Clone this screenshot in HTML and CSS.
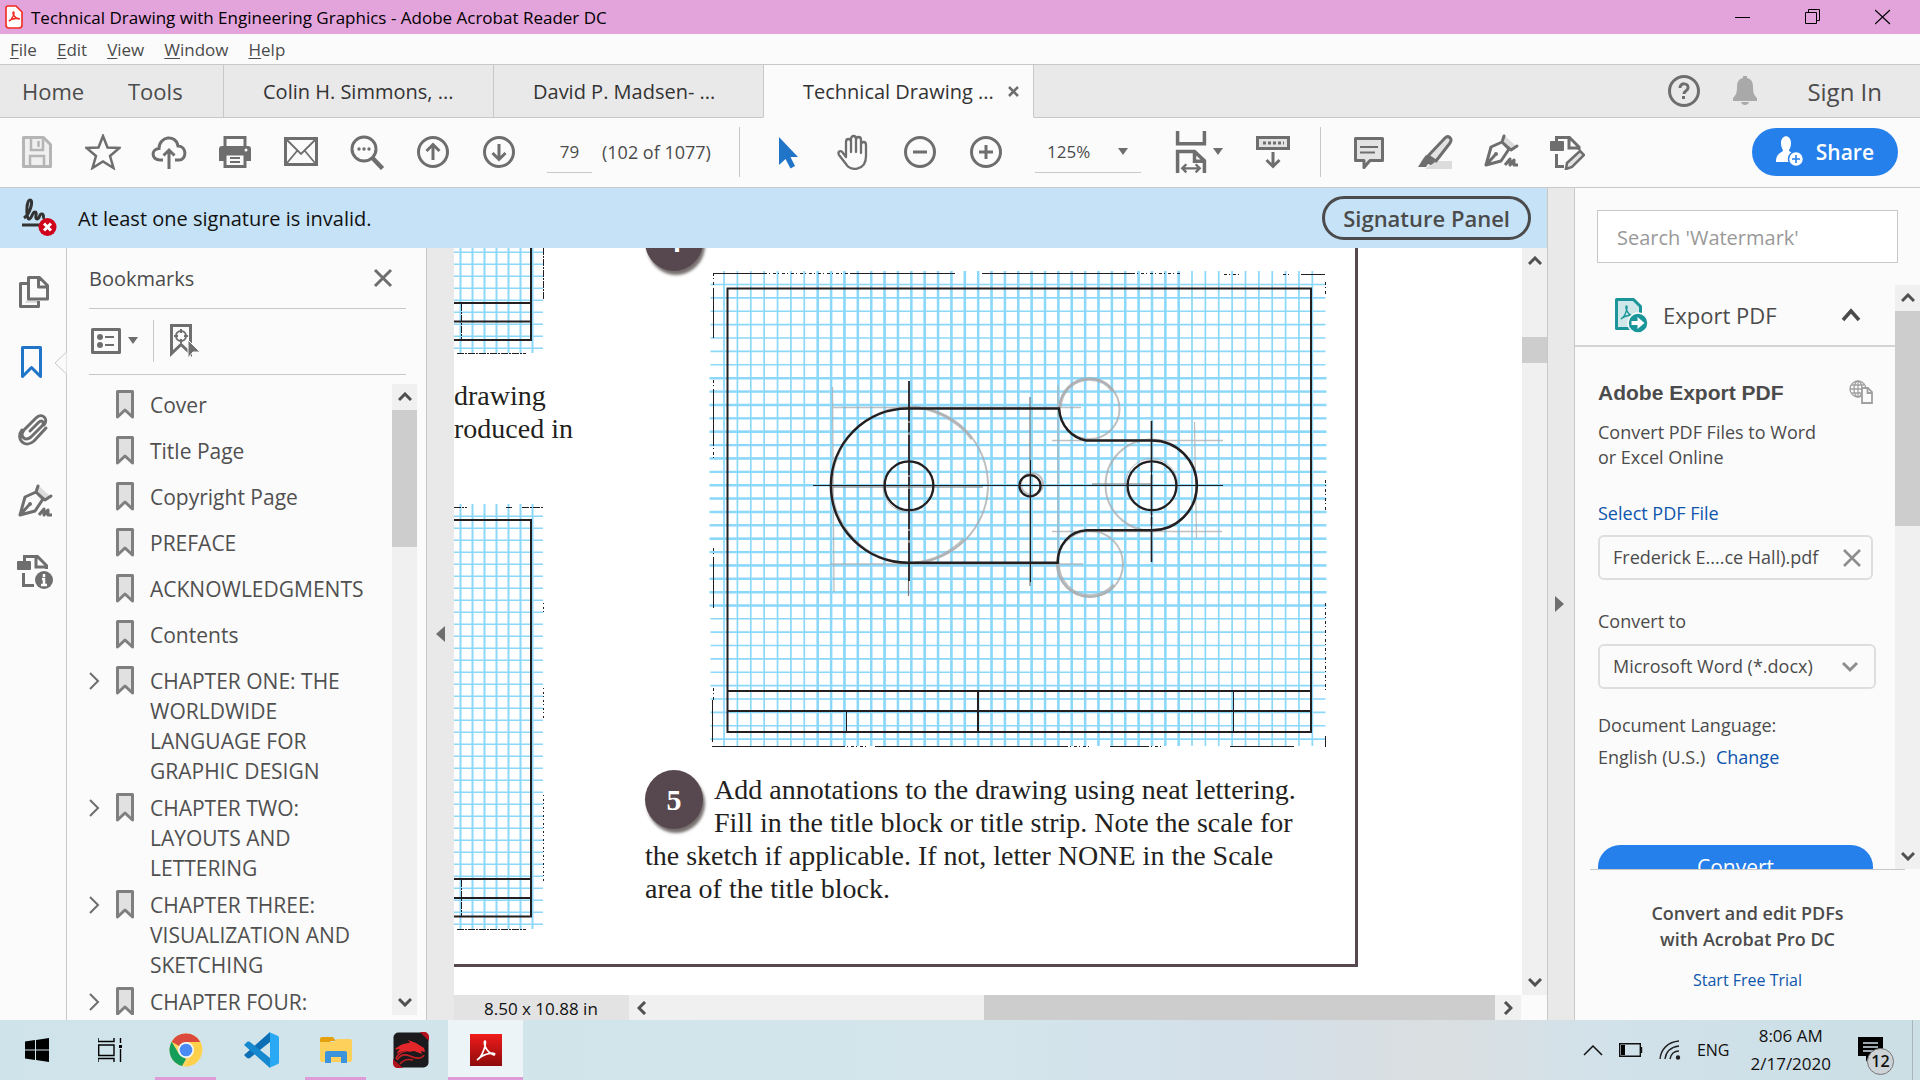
FILE: index.html
```html
<!DOCTYPE html>
<html lang="en">
<head>
    <meta charset="UTF-8">
    <meta name="viewport" content="width=device-width, initial-scale=1.0">
    <title>Technical Drawing with Engineering Graphics - Adobe Acrobat Reader DC</title>
    <link rel="stylesheet" href="styles.css">
</head>
<body>
    <!-- Shared icons -->
    <svg class="sprite" aria-hidden="true">
        <symbol id="i-bookmark" viewBox="0 0 18 30">
            <path d="M1.500 1.500h15v25.500l-7.500-7-7.500 7z" fill="#e1e1e1" stroke="#7f7f7f" stroke-width="3" stroke-linejoin="round"/>
        </symbol>
        <symbol id="i-pen" viewBox="0 0 36 36">
            <path d="M19 6l3-4 11 10-5 3z" fill="#dcdcdc"/>
            <path d="M21 2l-2 6 9 8 6-4M19 8L8 13 3 31l15-4 8-12zM3 31l9-10" fill="none" stroke="#6e6e6e" stroke-width="3" stroke-linejoin="round" stroke-linecap="round"/>
            <circle cx="13" cy="20" r="2" fill="#6e6e6e"/>
            <path d="M22 31l5-6 0 6 4-5 0 5h4" fill="none" stroke="#6e6e6e" stroke-width="3" stroke-linejoin="round"/>
        </symbol>
        <symbol id="i-up" viewBox="0 0 14 10"><path d="M1 8l6-6 6 6" fill="none" stroke="#505050" stroke-width="3"/></symbol>
        <symbol id="i-down" viewBox="0 0 14 10"><path d="M1 2l6 6 6-6" fill="none" stroke="#505050" stroke-width="3"/></symbol>
        <symbol id="i-caret" viewBox="0 0 10 7"><path d="M0 0h10L5 7z" fill="#6e6e6e"/></symbol>
        <symbol id="i-right" viewBox="0 0 12 18"><path d="M1 1l8 8-8 8" fill="none" stroke="#6e6e6e" stroke-width="2"/></symbol>
    </svg>

    <header class="titlebar">
        <svg width="18" height="24" viewBox="0 0 18 24"><path d="M3 1h8l6 6v13a3 3 0 0 1-3 3H4a3 3 0 0 1-3-3V3a2 2 0 0 1 2-2z" fill="#fff" stroke="#f02a20" stroke-width="1.600"/><path d="M4 16c4-2 6-9 4.500-9s0 6 5.500 7c2-1-7-1-10 2z" fill="none" stroke="#f02a20" stroke-width="1.400"/></svg>
        <h1 class="window-title">Technical Drawing with Engineering Graphics - Adobe Acrobat Reader DC</h1>
        <div class="window-buttons">
            <button aria-label="Minimize"><svg width="16" height="18"><path d="M0 9.500h15" stroke="#000"/></svg></button>
            <button aria-label="Restore"><svg width="16" height="18"><path d="M.5 4.500h11v11H.5zM3.500 4V1.500h11v11H12" fill="none" stroke="#000"/></svg></button>
            <button aria-label="Close"><svg width="16" height="18"><path d="M0 2l15 14M15 2L0 16" stroke="#000" stroke-width="1.200"/></svg></button>
        </div>
    </header>

    <nav class="menubar">
        <a href="#"><u>F</u>ile</a>
        <a href="#"><u>E</u>dit</a>
        <a href="#"><u>V</u>iew</a>
        <a href="#"><u>W</u>indow</a>
        <a href="#"><u>H</u>elp</a>
    </nav>

    <div class="tabs">
        <button class="tab-home">Home</button>
        <button class="tab-tools">Tools</button>
        <button class="tab">Colin H. Simmons, ...</button>
        <button class="tab">David P. Madsen- ...</button>
        <button class="tab active">Technical Drawing ...<svg width="11" height="11"><path d="M1 1l9 9M10 1l-9 9" stroke="#6e6e6e" stroke-width="2.500"/></svg></button>
        <div class="account">
            <button aria-label="Help"><svg width="34" height="34"><circle cx="17" cy="17" r="14.500" fill="none" stroke="#6e6e6e" stroke-width="3"/><path d="M13 14c0-6 9-5 8 0-.5 3-4 3-4 6" fill="none" stroke="#6e6e6e" stroke-width="3"/><rect x="15" y="22" width="3" height="3" fill="#6e6e6e"/></svg></button>
            <button aria-label="Notifications"><svg width="26" height="30" fill="#a9a9a9"><path d="M11 0h4v2c5 1 6 5 6 9 0 6 1 8 4 11v3H1v-3c3-3 4-5 4-11 0-4 1-8 6-9zM9 26h8c-1 4-7 4-8 0z"/></svg></button>
            <button class="signin">Sign In</button>
        </div>
    </div>

    <div class="toolbar">
        <div class="tools">
            <button aria-label="Save"><svg viewBox="0 0 36 36"><path d="M4.500 3.500h20l7 7v22h-27z" fill="#f0f0f0" stroke="#b5b5b5" stroke-width="3" stroke-linejoin="round"/><path d="M12 4v12h12V4M11 32V22h14v10M19.500 7v6" fill="none" stroke="#b5b5b5" stroke-width="2.500"/></svg></button>
            <button aria-label="Star"><svg viewBox="0 0 36 36"><path d="M18 2l4.500 11.500 12 .5-9.500 8 3.500 12L18 27.500 7.500 34 11 22 1.500 14l12-.5z" fill="none" stroke="#6e6e6e" stroke-width="2.500"/></svg></button>
            <button aria-label="Upload"><svg viewBox="0 0 36 36"><path d="M12 26H9C0 26 0 15 8 14.500 8 2 25 0 27 12c9 0 9 14 1 14h-4M18 35V17M12.500 21.500L18 16l5.500 5.500" fill="none" stroke="#6e6e6e" stroke-width="3"/></svg></button>
            <button aria-label="Print"><svg viewBox="0 0 36 36"><path d="M8 14V3.500h20V14" fill="none" stroke="#6e6e6e" stroke-width="3"/><path d="M5 12h26a3 3 0 0 1 3 3v12H2V15a3 3 0 0 1 3-3z" fill="#6e6e6e"/><path d="M8 20h20v12.500H8z" fill="#fafafa" stroke="#6e6e6e" stroke-width="3"/><path d="M13 24h10M13 28h10" stroke="#6e6e6e" stroke-width="2"/><circle cx="29" cy="16" r="1.500" fill="#fff"/></svg></button>
            <button aria-label="E-mail"><svg viewBox="0 0 36 36"><path d="M2.500 4.500h31v26h-31z" fill="none" stroke="#6e6e6e" stroke-width="3"/><path d="M4 6l14 14L32 6M4 29l10-12M32 29L22 17" fill="none" stroke="#6e6e6e" stroke-width="1.800"/></svg></button>
            <button aria-label="Find"><svg viewBox="0 0 36 36"><circle cx="15" cy="15" r="12" fill="none" stroke="#6e6e6e" stroke-width="3"/><path d="M23.500 24l10 10.500" stroke="#6e6e6e" stroke-width="4.500"/><g fill="#6e6e6e"><circle cx="10" cy="15" r="1.700"/><circle cx="15" cy="15" r="1.700"/><circle cx="20" cy="15" r="1.700"/></g></svg></button>
            <button aria-label="Previous page"><svg viewBox="0 0 36 36"><circle cx="18" cy="18" r="14.500" fill="none" stroke="#6e6e6e" stroke-width="3"/><path d="M18 26V12M11.500 17L18 10.500l6.500 6.500" fill="none" stroke="#6e6e6e" stroke-width="3"/></svg></button>
            <button aria-label="Next page"><svg viewBox="0 0 36 36"><circle cx="18" cy="18" r="14.500" fill="none" stroke="#6e6e6e" stroke-width="3"/><path d="M18 10v14M11.500 19l6.500 6.500 6.500-6.500" fill="none" stroke="#6e6e6e" stroke-width="3"/></svg></button>
        </div>
        <input class="page-number" type="text" value="79" aria-label="Page number">
        <span class="page-count">(102 of 1077)</span>
        <div class="tools divided">
            <button aria-label="Select"><svg viewBox="0 0 36 36"><path d="M9 3v28l6.500-6 5 9.500 4.500-2.500-4.500-9H28z" fill="#2175c8"/></svg></button>
            <button aria-label="Hand"><svg viewBox="0 0 36 36"><path d="M10 20V8c0-4 5-4 5 0v10V5c0-4 5-4 5 0v13V6c0-4 5-4 5 0v13-8c0-4 5-4 5 0v11c0 16-17 15-20 8L3 21c-2-4 2-5 4-2l3 4z" fill="none" stroke="#6e6e6e" stroke-width="2.300" stroke-linejoin="round"/></svg></button>
            <button aria-label="Zoom out"><svg viewBox="0 0 36 36"><circle cx="18" cy="18" r="14.500" fill="none" stroke="#6e6e6e" stroke-width="3"/><path d="M11 18h14" stroke="#6e6e6e" stroke-width="3"/></svg></button>
            <button aria-label="Zoom in"><svg viewBox="0 0 36 36"><circle cx="18" cy="18" r="14.500" fill="none" stroke="#6e6e6e" stroke-width="3"/><path d="M11 18h14M18 11v14" stroke="#6e6e6e" stroke-width="3"/></svg></button>
        </div>
        <div class="zoom">
            <select aria-label="Zoom level"><option>125%</option></select>
            <svg width="12" height="7"><use href="#i-caret"/></svg>
        </div>
        <div class="tools page-tools">
            <button aria-label="Fit width" class="with-caret"><svg class="fit" viewBox="0 0 30 36"><path d="M3.500 0v11h23V0M3.500 36V17.500H18l8.500 8V36M18 18v8h8" fill="none" stroke="#6e6e6e" stroke-width="3"/><path d="M8 32h14M11 28.500L7.500 32l3.500 3.500M19 28.500l3.500 3.500-3.500 3.500" fill="none" stroke="#6e6e6e" stroke-width="2"/></svg><svg class="caret"><use href="#i-caret"/></svg></button>
            <button aria-label="Scrolling"><svg viewBox="0 0 36 36"><path d="M2.500 3.500h31v11h-31z" fill="#e3e3e3" stroke="#6e6e6e" stroke-width="3"/><path d="M8 9h21" stroke="#6e6e6e" stroke-width="3" stroke-dasharray="3 2"/><path d="M18 18v13M11.500 26l6.500 6.500 6.500-6.500" fill="none" stroke="#6e6e6e" stroke-width="3"/></svg></button>
        </div>
        <div class="tools divided">
            <button aria-label="Comment"><svg viewBox="0 0 36 36"><path d="M4.500 4.500h27v22H19l-6 7v-7H4.500z" fill="#e3e3e3" stroke="#6e6e6e" stroke-width="3" stroke-linejoin="round"/><path d="M9 13h18M9 18.500h15" stroke="#6e6e6e" stroke-width="2"/></svg></button>
            <button aria-label="Highlight"><svg viewBox="0 0 36 36"><path d="M17 27h18v8H8z" fill="#dcdcdc"/><path d="M28 4c3-3 8 0 5 5L19 27l-8-5z" fill="#e3e3e3" stroke="#6e6e6e" stroke-width="3" stroke-linejoin="round"/><path d="M9 21l9 7-4 3-3-1-2 3H1l5-8z" fill="#6e6e6e"/></svg></button>
            <button aria-label="Sign"><svg><use href="#i-pen"/></svg></button>
            <button aria-label="Edit"><svg viewBox="0 0 36 36"><path d="M7.500 9V3.500h13L30 13v3M20 4v10h9M7.500 20v12.500H15" fill="none" stroke="#6e6e6e" stroke-width="3"/><rect x="1" y="7" width="14" height="10" rx="1" fill="#6e6e6e"/><path d="M31 17l4 4-12 12-6 2 1-6z" fill="#e3e3e3" stroke="#6e6e6e" stroke-width="2.500"/></svg></button>
        </div>
        <button class="share"><svg width="28" height="32" viewBox="0 0 28 32"><path d="M5 7c0-9 10-9 10 0 0 5-2 6-2 8l5 3v8H0c0-6 2-8 7-11 0-2-2-3-2-8z" fill="#fff"/><circle cx="20" cy="23" r="7.500" fill="#fff" stroke="#2680eb" stroke-width="1.500"/><path d="M16 23h8M20 19v8" stroke="#2680eb" stroke-width="1.600"/></svg>Share</button>
    </div>

    <main class="workspace">
        <div class="center">
            <div class="signature-bar">
                <svg width="38" height="40" viewBox="0 0 38 40"><path d="M4 20C10 16 14 2 10 2S6 21 9 21s3-7 6-7-1 7 2 7 2-6 5-5 0 5 3 4M2 27h19" fill="none" stroke="#333" stroke-width="3"/><circle cx="27.500" cy="29" r="9" fill="#d0021b"/><path d="M24 25.500l7 7M31 25.500l-7 7" stroke="#fff" stroke-width="3"/></svg>
                <span class="signature-text">At least one signature is invalid.</span>
                <button class="signature-button">Signature Panel</button>
            </div>

            <div class="panes">
                <nav class="rail">
                    <button aria-label="Page thumbnails"><svg viewBox="0 0 36 36"><path d="M10 26h10v3H8z" fill="#ddd"/><path d="M10 9.500H3.500v23h18V27M11.500 3.500h11l8 8V25h-19zM21.500 4v9H30" fill="none" stroke="#6e6e6e" stroke-width="3" stroke-linejoin="round"/></svg></button>
                    <button aria-label="Bookmarks" class="selected"><svg viewBox="0 0 36 36"><path d="M5.500 3.500h18v29l-9-9-9 9z" fill="none" stroke="#2175c8" stroke-width="3" stroke-linejoin="round"/></svg></button>
                    <button aria-label="Attachments"><svg viewBox="0 3 36 36"><path d="M13 20l9-9c3-3 6 1 3 4L14 26c-6 5-12-1-7-7L19 7c6-6 13 1 8 7M29 17L17 30C8 38-2 28 5 19" fill="none" stroke="#6e6e6e" stroke-width="3" stroke-linecap="round"/></svg></button>
                    <button aria-label="Signatures"><svg><use href="#i-pen"/></svg></button>
                    <button aria-label="Document info"><svg viewBox="0 0 36 36"><path d="M7.500 9V2.500h13l9 9V15M19 3v10h10M6.500 19v12.500H17" fill="none" stroke="#6e6e6e" stroke-width="3"/><rect x="0" y="7" width="14" height="9" rx="1" fill="#6e6e6e"/><circle cx="27" cy="26" r="9" fill="#6e6e6e"/><path d="M27 20v3M25 25h2v6M24 31h6" stroke="#fff" stroke-width="2.500" fill="none"/></svg></button>
                </nav>

                <section class="bookmarks">
                    <svg class="notch" width="13" height="24"><path d="M12.500 0v1L1 12l11.500 11v1" fill="#fbfbfb" stroke="#c8c8c8"/></svg>
                    <div class="bookmarks-head">
                        <h2>Bookmarks</h2>
                        <button aria-label="Close bookmarks"><svg width="20" height="20"><path d="M2 2l16 16M18 2L2 18" stroke="#6e6e6e" stroke-width="3"/></svg></button>
                    </div>
                    <div class="bookmarks-tools">
                        <button aria-label="Options"><svg width="32" height="28"><path d="M3.500 2.500h27v23h-27z" fill="none" stroke="#6e6e6e" stroke-width="3" stroke-linejoin="round"/><g fill="#6e6e6e"><circle cx="11" cy="10" r="3"/><circle cx="11" cy="18" r="3"/><path d="M16 9h9v2h-9zM16 17h9v2h-9z"/></g></svg><svg width="10" height="7"><use href="#i-caret"/></svg></button>
                        <button aria-label="Find current bookmark"><svg width="34" height="36"><path d="M4.500 2.500h19v28l-9.500-9-9.500 9z" fill="none" stroke="#6e6e6e" stroke-width="3"/><circle cx="14" cy="13" r="5" fill="none" stroke="#6e6e6e" stroke-width="2"/><path d="M14 6v4M14 16v4M7 13h4M17 13h4" stroke="#6e6e6e" stroke-width="2"/><path d="M21 17v18l5-6h7z" fill="#6e6e6e" stroke="#fbfbfb"/></svg></button>
                    </div>
                    <div class="bookmarks-body">
                        <ul class="bookmark-list">
                            <li><svg><use href="#i-bookmark"/></svg><a href="#">Cover</a></li>
                            <li><svg><use href="#i-bookmark"/></svg><a href="#">Title Page</a></li>
                            <li><svg><use href="#i-bookmark"/></svg><a href="#">Copyright Page</a></li>
                            <li><svg><use href="#i-bookmark"/></svg><a href="#">PREFACE</a></li>
                            <li><svg><use href="#i-bookmark"/></svg><a href="#">ACKNOWLEDGMENTS</a></li>
                            <li><svg><use href="#i-bookmark"/></svg><a href="#">Contents</a></li>
                            <li class="chapter"><button aria-label="Expand"><svg><use href="#i-right"/></svg></button><svg><use href="#i-bookmark"/></svg><a href="#">CHAPTER ONE: THE<br>WORLDWIDE<br>LANGUAGE FOR<br>GRAPHIC DESIGN</a></li>
                            <li class="chapter"><button aria-label="Expand"><svg><use href="#i-right"/></svg></button><svg><use href="#i-bookmark"/></svg><a href="#">CHAPTER TWO:<br>LAYOUTS AND<br>LETTERING</a></li>
                            <li class="chapter"><button aria-label="Expand"><svg><use href="#i-right"/></svg></button><svg><use href="#i-bookmark"/></svg><a href="#">CHAPTER THREE:<br>VISUALIZATION AND<br>SKETCHING</a></li>
                            <li class="chapter"><button aria-label="Expand"><svg><use href="#i-right"/></svg></button><svg><use href="#i-bookmark"/></svg><a href="#">CHAPTER FOUR:</a></li>
                        </ul>
                        <div class="scrollbar list-scroll">
                            <button aria-label="Scroll up"><svg><use href="#i-up"/></svg></button>
                            <div class="thumb"></div>
                            <button aria-label="Scroll down"><svg><use href="#i-down"/></svg></button>
                        </div>
                    </div>
                </section>

                <button class="gutter gutter-left" aria-label="Collapse navigation"><svg width="9" height="16"><path d="M9 0v16L0 8z" fill="#6e6e6e"/></svg></button>

                <section class="document">
                    <div class="page-view">
                        <article class="page">
                            <div class="column-left">
                                <svg class="sketch" width="91" height="108" viewBox="454 248 91 108">
                                    <g stroke="#8cd8fa" fill="none">
                                        <path d="M459.500 300.500H534" stroke-width="105" stroke-dasharray="2 10"/>
                                        <path d="M498.500 251.500V350" stroke-width="89" stroke-dasharray="1.500 10.500"/>
                                    </g>
                                    <path d="M531 248v92H454M454 303h77M454 321.500h77" fill="none" stroke="#231f20" stroke-width="2"/>
                                    <path d="M461.500 304v36M543.500 248v52M457 353.500h69" stroke="#231f20" stroke-dasharray="7 1 2 1"/>
                                </svg>
                                <p class="body-text">drawing<br>roduced in</p>
                                <svg class="sketch" width="91" height="428" viewBox="454 504 91 428">
                                    <g stroke="#8cd8fa" fill="none">
                                        <path d="M459.500 716.500H534" stroke-width="425" stroke-dasharray="2 10"/>
                                        <path d="M498.500 515.500V925" stroke-width="89" stroke-dasharray="1.500 10.500"/>
                                    </g>
                                    <path d="M454 520h77v396.500H454M454 879h77M454 898h77" fill="none" stroke="#231f20" stroke-width="2"/>
                                    <path d="M461.500 880v36M457 929.500h69M454 507.500h13M506 507.500h6M522 507.500h22" stroke="#231f20" stroke-dasharray="7 1 2 1"/>
                                    <path d="M543.500 603v10M543.500 688v30M543.500 795v86" stroke="#231f20" stroke-dasharray="1 3 2 2"/>
                                </svg>
                            </div>
                            <div class="column-right">
                                <span class="step step-4">4</span>
                                <svg class="figure" width="620" height="476" viewBox="709 271 620 476">
                                    <!-- grid paper -->
                                    <g stroke="#8cd8fa" fill="none">
                                        <path d="M723.200 508.500H1314" stroke-width="475" stroke-dasharray="1.700 11.670"/>
                                        <path d="M1018 283.700V741" stroke-width="615" stroke-dasharray="1.600 11.770"/>
                                        <path d="M816.500 508.500H1187" stroke-width="475" stroke-dasharray="2.500 10.870"/>
                                        <path d="M1018 377.100V609" stroke-width="617" stroke-dasharray="2.400 10.970"/>
                                    </g>
                                    <!-- construction lines -->
                                    <g stroke="#a9abae" fill="none" stroke-opacity=".75">
                                        <circle cx="910" cy="485" r="78" stroke-width="2"/>
                                        <path d="M911 407c20 0 46 12 61 32M914 563c18-1 38-11 50-24" stroke-width="3"/>
                                        <circle cx="1089.500" cy="409" r="30" stroke-width="2"/>
                                        <path d="M1060 407c1-16 14-28 29-28 11 0 18 4 24 12" stroke-width="3.500"/>
                                        <circle cx="1090" cy="564" r="33" stroke-width="2"/>
                                        <path d="M1058 562c0 20 14 34 32 34 10 0 18-4 24-11" stroke-width="3.500"/>
                                        <circle cx="1151" cy="485" r="45.500" stroke-width="2"/>
                                        <circle cx="1151.500" cy="484.500" r="26"/>
                                        <circle cx="1032" cy="484" r="11" stroke-width="2"/>
                                        <circle cx="908" cy="487" r="25"/>
                                        <path d="M832.500 387l1.500 205M1058 385v182M1194.500 422l2 116M832 407.500h249M830 564h253M1052 440.500h171M1052 531.500h170" stroke-width="1.300"/>
                                    </g>
                                    <g stroke="#77787b" fill="none">
                                        <path d="M833 487h150M1092 484h60M1030 397v189M908.500 580v16" stroke-width="1.200"/>
                                    </g>
                                    <!-- part outline -->
                                    <g stroke="#231f20" fill="none">
                                        <path d="M813 485.500h410M909 381v200M1030.500 460v122M1151.500 421v141"/>
                                        <path d="M1151.500 421v141M909 381v200" stroke-width="1.600" stroke-dasharray="40 2 9 3"/>
                                        <path d="M1059 408.500H908a77 77 0 0 0 0 154.200h149.700c0-17 11-31.500 29-32.400H1152a44.900 44.900 0 0 0 0-89.800H1086c-14-3-25.500-14-27-32z" stroke-width="2.500"/>
                                        <circle cx="909" cy="485.700" r="24.400" stroke-width="2.300"/>
                                        <circle cx="1152" cy="485.700" r="24.400" stroke-width="2.300"/>
                                        <circle cx="1030" cy="485.700" r="10.600" stroke-width="2.300"/>
                                    </g>
                                    <!-- border and title strip -->
                                    <path d="M727.500 288.500h583.500v443.500H727.500z" fill="none" stroke="#231f20" stroke-width="2"/>
                                    <path d="M728 691h583M728 711h583M978 691v41" fill="none" stroke="#231f20" stroke-width="2"/>
                                    <path d="M846.500 711v21M1233.500 691v41" stroke="#231f20"/>
                                    <g stroke="#231f20">
                                        <path d="M714 273.500h50M850 273.500h105M982 273.500h150M1301 274.500h24M713.500 288v50M713.500 390v56M713.500 559v49M712.500 700v42M712 746.500h130M875 746.500h190M1110 746.500h36M1230 746.500h64M1325.500 736v11"/>
                                        <path d="M764 273.500h90M1132 273.500h50M1224 274.500h16M1283 274.500h8M713.500 273v14M713.500 380v80M713.500 548v12M713.500 688v14M842 746.500h24M1065 746.500h24M1146 746.500h18M1325.500 282v12M1325.500 603v90M1325.500 480v30" stroke-dasharray="3 2 1 3"/>
                                    </g>
                                </svg>
                                <p class="body-text step-text"><span class="step step-5">5</span>Add annotations to the drawing using neat lettering.<br>Fill in the title block or title strip. Note the scale for<br>the sketch if applicable. If not, letter NONE in the Scale<br>area of the title block.</p>
                            </div>
                        </article>
                        <div class="scrollbar page-scroll">
                            <button aria-label="Scroll up"><svg><use href="#i-up"/></svg></button>
                            <div class="thumb"></div>
                            <button aria-label="Scroll down"><svg><use href="#i-down"/></svg></button>
                        </div>
                    </div>
                    <div class="page-footer">
                        <span class="page-size">8.50 x 10.88 in</span>
                        <div class="hscroll">
                            <button aria-label="Scroll left"><svg width="10" height="14"><path d="M8 1L2 7l6 6" fill="none" stroke="#505050" stroke-width="3"/></svg></button>
                            <div class="thumb"></div>
                            <button aria-label="Scroll right"><svg width="10" height="14"><path d="M2 1l6 6-6 6" fill="none" stroke="#505050" stroke-width="3"/></svg></button>
                        </div>
                    </div>
                </section>
            </div>
        </div>

        <button class="gutter gutter-right" aria-label="Collapse tools"><svg width="9" height="16"><path d="M0 0v16l9-8z" fill="#6e6e6e"/></svg></button>

        <aside class="tools-pane">
            <input class="search" type="search" placeholder="Search 'Watermark'" aria-label="Search tools">
            <div class="export-wrap">
                <div class="export">
                    <div class="export-head">
                        <svg width="36" height="38" viewBox="0 0 36 38"><path d="M3.500 3.500h17l7 7v22h-24z" fill="#cfe7e8" stroke="#1a959a" stroke-width="3" stroke-linejoin="round"/><path d="M8 23c5-3 7-13 5.500-13s0 9 7 10c3-1-8-2-12.500 3z" fill="none" stroke="#1a959a" stroke-width="1.400"/><circle cx="25" cy="27" r="10" fill="#1a959a" stroke="#fbfbfb" stroke-width="1.500"/><path d="M18.500 25h6v-4l7 6-7 6v-4h-6z" fill="#fff"/></svg>
                        <h2>Export PDF</h2>
                        <button aria-label="Collapse"><svg width="20" height="14"><path d="M2 12l8-9 8 9" fill="none" stroke="#4b4b4b" stroke-width="3.500"/></svg></button>
                    </div>
                    <div class="export-body">
                        <div class="export-title">
                            <h3>Adobe Export PDF</h3>
                            <svg width="24" height="24" fill="none" stroke="#a0a0a0" stroke-width="1.300"><circle cx="9" cy="9" r="8"/><ellipse cx="9" cy="9" rx="4" ry="8"/><path d="M1 9h16M2.500 5h13M2.500 13h13M9 1v16"/><path d="M13 8h6l4 4v11H13zM18.500 8v5H23" fill="#fbfbfb" stroke-width="1.800"/></svg>
                        </div>
                        <p>Convert PDF Files to Word<br>or Excel Online</p>
                        <a class="select-file" href="#">Select PDF File</a>
                        <div class="file-box"><span>Frederick E....ce Hall).pdf</span><button aria-label="Remove file"><svg width="18" height="18"><path d="M1 1l16 16M17 1L1 17" stroke="#8e8e8e" stroke-width="2.500"/></svg></button></div>
                        <label for="format">Convert to</label>
                        <div class="format-box">
                            <select id="format"><option>Microsoft Word (*.docx)</option></select>
                            <svg width="16" height="12"><path d="M1 2l7 7 7-7" fill="none" stroke="#8e8e8e" stroke-width="3"/></svg>
                        </div>
                        <p class="language">Document Language:<br>English (U.S.) <a href="#">Change</a></p>
                        <button class="convert">Convert</button>
                    </div>
                </div>
                <div class="scrollbar tools-scroll">
                    <button aria-label="Scroll up"><svg><use href="#i-up"/></svg></button>
                    <div class="thumb"></div>
                    <button aria-label="Scroll down"><svg><use href="#i-down"/></svg></button>
                </div>
            </div>
            <div class="promo">
                <p>Convert and edit PDFs<br>with Acrobat Pro DC</p>
                <a href="#">Start Free Trial</a>
            </div>
        </aside>
    </main>

    <footer class="taskbar">
        <button class="start" aria-label="Start"><svg width="24" height="24"><path d="M0 3.500l10-1.400v9.400H0zM11 2l13-2v11.500H11zM0 12.500h10v9.400L0 20.500zM11 12.500h13V24l-13-2z"/></svg></button>
        <button class="task" aria-label="Task view"><svg width="26" height="24" fill="none" stroke="#000" stroke-width="1.400"><path d="M0 0v3.500h16V0M0 7h16v10.500H.7V7M0 24v-3.500h16V24M22.500 0v5M22.500 11v13"/><path d="M21 8.500h3" stroke-width="3"/></svg></button>
        <button class="task running" aria-label="Chrome"><svg width="34" height="34" viewBox="0 0 34 34"><circle cx="17" cy="17" r="16.500" fill="#fdd663"/><path d="M17 17L2.700 8.700A16.500 16.500 0 0 1 31.300 9H17z" fill="#db4a3c"/><path d="M2.700 8.700L10 21l7 5-4 7A16.500 16.500 0 0 1 2.700 8.700z" fill="#149e5a"/><path d="M17 9h14.300c4.500 9-2 24-15 24.500l8-13z" fill="#fdd04b"/><circle cx="17" cy="17" r="8" fill="#f4f6f8"/><circle cx="17" cy="17" r="6.300" fill="#4a8af4"/></svg></button>
        <button class="task" aria-label="Visual Studio Code"><svg width="36" height="36" viewBox="0 0 36 36"><path d="M1 23l3 3c1 .6 2 .5 3 0L27 10V0z" fill="#0c6fb5"/><path d="M1 13l3-3c1-.6 2-.5 3 0l20 16v10z" fill="#1588cf"/><path d="M26 0l9 4c.6.300 1 1 1 1.500v25c0 .7-.4 1.200-1 1.500l-9 4c1-1 1-2 1-3V3c0-1 0-2-1-3z" fill="#29a8f3"/></svg></button>
        <button class="task running" aria-label="File Explorer"><svg width="32" height="28"><path d="M0 3a2 2 0 0 1 2-2h11l3 4h-4L0 9z" fill="#e5a00d"/><path d="M0 6h14l3-3h13a2 2 0 0 1 2 2v19a2 2 0 0 1-2 2H2a2 2 0 0 1-2-2z" fill="#fdd05c"/><path d="M5 27V17a2 2 0 0 1 2-2h18a2 2 0 0 1 2 2v10h-6v-6H11v6z" fill="#3b93dc"/></svg></button>
        <button class="task" aria-label="Dragon Center"><svg width="36" height="36"><rect x=".5" y=".5" width="35" height="35" rx="5" fill="#1b1b1d"/><path d="M27 0h4c3 0 5 2 5 5v4zM0 27v4c0 3 2 5 5 5h5z" fill="#b3121d"/><path d="M2 17c5-4 9-6 15-6l-2-3 8 3 8 5 1 4-4-1 1 3-8-3c-3 1-6 1-9 0-3 0-6 1-8 3 0-2 1-3 3-5-2 0-4 1-5 0z" fill="#e3262a"/><path d="M4 28c3-5 8-6 13-4 6 3 12 3 14-1M7 32c4-5 8-5 13-4M13 19c-5 1-9 4-10 8" fill="none" stroke="#c41f25" stroke-width="1.600"/></svg></button>
        <button class="task active" aria-label="Acrobat Reader"><svg width="34" height="34"><defs><linearGradient id="pdf" x1="0" y1="0" x2="0" y2="1"><stop offset="0" stop-color="#f11b1b"/><stop offset="1" stop-color="#8d0b0b"/></linearGradient></defs><rect x="1" y="1" width="32" height="32" fill="url(#pdf)"/><path d="M8 27c6-3 10-19 8-19s0 11 9 14c4-3-9-3-17 5z" fill="none" stroke="#fff" stroke-width="1.600"/></svg></button>
        <div class="tray">
            <button aria-label="Hidden icons"><svg width="20" height="12"><path d="M1 11l9-9 9 9" fill="none" stroke="#111" stroke-width="1.500"/></svg></button>
            <svg width="24" height="14"><path d="M.7.700h20.600v12.600H.7zM22.500 4v6" fill="none" stroke="#111" stroke-width="1.400"/><path d="M2 2h4v10H2z"/></svg>
            <svg width="22" height="20" fill="none" stroke="#222" stroke-width="1.400"><path d="M1 19C2 9 9 2 20 1M6 19C7 12 12 7 20 6M11 19c1-5 4-8 9-8"/><circle cx="19" cy="17.500" r="1.500" fill="#111"/></svg>
            <span class="lang">ENG</span>
            <time class="clock">8:06 AM<br>2/17/2020</time>
            <button class="action" aria-label="Action center"><svg width="26" height="26"><path d="M0 0h25v19H11l-3 6v-6H0z"/><path d="M5 6h15M5 10h15M5 14h10" stroke="#d0dfe6" stroke-width="1.300"/></svg><span class="count">12</span></button>
        </div>
    </footer>
</body>
</html>
```

FILE: styles.css
```css
* {
    box-sizing: border-box;
}
body {
    margin: 0;
    height: 100vh;
    display: flex;
    flex-direction: column;
    overflow: hidden;
    font-family: "Open Sans", "Noto Sans", sans-serif;
    font-size: 18px;
    color: #4b4b4b;
    background-color: #fbfbfb;
}
h1, h2, h3, p, ul {
    margin: 0;
    padding: 0;
    font-weight: normal;
}
button, input, select {
    font: inherit;
    color: inherit;
    background: none;
    border: none;
    padding: 0;
    margin: 0;
    appearance: none;
}
a {
    color: inherit;
    text-decoration: none;
}
svg {
    display: block;
    flex-shrink: 0;
}
.sprite {
    position: absolute;
    width: 0;
    height: 0;
}

/* Title bar and menu */
.titlebar {
    display: flex;
    align-items: center;
    height: 34px;
    flex-shrink: 0;
    padding: 0 2px 0 5px;
    background-color: #e3a3db;
    color: #000;
}
.window-title {
    flex: 1;
    margin-left: 8px;
    font-size: 17px;
}
.window-buttons {
    display: flex;
}
.window-buttons button {
    display: flex;
    align-items: center;
    justify-content: center;
    width: 70px;
    height: 34px;
}
.menubar {
    display: flex;
    align-items: center;
    gap: 20px;
    height: 30px;
    flex-shrink: 0;
    padding-left: 10px;
    font-size: 17px;
}
.menubar u {
    text-underline-offset: 2px;
}

/* Tabs */
.tabs {
    display: flex;
    height: 54px;
    flex-shrink: 0;
    background-color: #e9e9e9;
    border-top: 1px solid #c8c8c8;
    font-size: 20px;
}
.tabs > button, .account {
    border-bottom: 1px solid #c8c8c8;
}
.tab-home, .tab-tools {
    font-size: 22px;
    text-align: left;
}
.tab-home {
    width: 128px;
    padding-left: 22px;
}
.tab-tools {
    width: 95px;
}
.tab {
    display: flex;
    align-items: center;
    justify-content: space-between;
    width: 270px;
    padding: 0 14px 0 39px;
    border-left: 1px solid #c8c8c8;
    color: #333;
    white-space: nowrap;
}
.tabs > .tab.active {
    width: 271px;
    background-color: #fbfbfb;
    border-right: 1px solid #c8c8c8;
    border-bottom-color: #fbfbfb;
}
.account {
    flex: 1;
    display: flex;
    align-items: center;
    justify-content: flex-end;
    gap: 31px;
    padding-right: 38px;
}
.signin {
    margin-left: 18px;
    font-size: 24px;
}

/* Toolbar */
.toolbar {
    display: flex;
    align-items: center;
    height: 70px;
    flex-shrink: 0;
    padding: 0 0 2px 4px;
    border-bottom: 1px solid #c8c8c8;
    font-size: 17px;
}
.tools {
    display: flex;
}
.tools button {
    display: flex;
    align-items: center;
    justify-content: center;
    width: 66px;
    height: 50px;
}
.tools svg {
    width: 36px;
    height: 36px;
}
.tools.divided {
    padding-left: 15px;
    border-left: 1px solid #c8c8c8;
}
.page-number {
    width: 45px;
    height: 42px;
    margin: 0 10px 0 15px;
    text-align: center;
    border-bottom: 1px solid #c8c8c8;
}
.page-count {
    width: 137px;
    font-size: 18px;
}
.zoom {
    display: flex;
    align-items: center;
    width: 106px;
    height: 42px;
    margin: 0 15px 0 16px;
    padding: 0 12px;
    border-bottom: 1px solid #c8c8c8;
}
.zoom select {
    flex: 1;
}
.page-tools {
    width: 164px;
}
.tools .with-caret {
    width: 84px;
    gap: 4px;
}
.tools .caret {
    width: 10px;
    height: 7px;
}
.tools .fit {
    height: 42px;
}
.share {
    display: flex;
    align-items: center;
    gap: 12px;
    height: 48px;
    margin: 0 22px 0 auto;
    padding: 0 24px;
    border-radius: 24px;
    background-color: #2680eb;
    color: #fff;
    font-size: 21px;
    font-weight: 600;
}

/* Workspace */
.workspace {
    flex: 1;
    display: flex;
    min-height: 0;
}
.center {
    flex: 1;
    display: flex;
    flex-direction: column;
    min-width: 0;
}
.signature-bar {
    display: flex;
    align-items: center;
    height: 60px;
    flex-shrink: 0;
    padding: 0 16px 0 20px;
    background-color: #c6e2f7;
}
.signature-text {
    flex: 1;
    margin-left: 20px;
    color: #111;
    font-size: 20px;
}
.signature-button {
    display: flex;
    align-items: center;
    height: 44px;
    padding: 0 18px;
    border: 3px solid #4b4b4b;
    border-radius: 22px;
    font-size: 22px;
    font-weight: 600;
}
.panes {
    flex: 1;
    display: flex;
    min-height: 0;
}
.gutter {
    display: flex;
    align-items: center;
    justify-content: center;
    width: 28px;
    flex-shrink: 0;
    background-color: #e9e9e9;
    border-left: 1px solid #c8c8c8;
}
.gutter-right {
    border-right: 1px solid #c8c8c8;
    padding-right: 4px;
}

/* Navigation rail */
.rail {
    display: flex;
    flex-direction: column;
    width: 66px;
    padding-top: 9px;
}
.rail button {
    display: flex;
    align-items: center;
    height: 70px;
    padding-left: 17px;
}
.rail svg {
    width: 36px;
    height: 36px;
}

/* Bookmarks */
.bookmarks {
    position: relative;
    display: flex;
    flex-direction: column;
    width: 360px;
    border-left: 1px solid #c8c8c8;
}
.notch {
    position: absolute;
    left: -13px;
    top: 103px;
}
.bookmarks-head {
    display: flex;
    align-items: center;
    justify-content: space-between;
    height: 61px;
    margin: 0 20px 0 22px;
    padding-right: 13px;
    border-bottom: 1px solid #c8c8c8;
}
.bookmarks-head h2 {
    font-size: 20px;
}
.bookmarks-tools {
    display: flex;
    align-items: center;
    height: 66px;
    margin: 0 20px 0 22px;
    padding-bottom: 2px;
    border-bottom: 1px solid #c8c8c8;
}
.bookmarks-tools button {
    display: flex;
    align-items: center;
    gap: 7px;
    height: 42px;
}
.bookmarks-tools button + button {
    margin-left: 15px;
    padding-left: 13px;
    border-left: 1px solid #c8c8c8;
}
.bookmarks-body {
    flex: 1;
    display: flex;
    min-height: 0;
    margin: 9px 9px 5px 22px;
}
.bookmark-list {
    flex: 1;
    overflow: hidden;
    padding-top: 6px;
    list-style: none;
    font-size: 21px;
    line-height: 30px;
    color: #505050;
}
.bookmark-list li {
    display: flex;
    align-items: flex-start;
    gap: 16px;
    min-height: 46px;
    padding: 0 0 7px 27px;
}
.bookmark-list li > svg {
    width: 18px;
    height: 30px;
}
.bookmark-list a {
    white-space: nowrap;
}
.bookmark-list .chapter {
    min-height: 0;
    padding-left: 0;
    gap: 0;
}
.chapter button {
    width: 27px;
    padding-top: 6px;
}
.chapter button svg {
    width: 12px;
    height: 18px;
}
.chapter a {
    margin-left: 16px;
}

/* Scrollbars */
.scrollbar {
    display: flex;
    flex-direction: column;
    width: 25px;
    flex-shrink: 0;
    background-color: #f0f0f0;
}
.scrollbar button {
    display: flex;
    align-items: center;
    justify-content: center;
    height: 26px;
}
.scrollbar button:last-child {
    margin-top: auto;
}
.scrollbar svg {
    width: 14px;
    height: 10px;
}
.thumb {
    background-color: #cdcdcd;
}
.list-scroll .thumb {
    height: 137px;
}
.page-scroll .thumb {
    height: 26px;
    margin-top: 63px;
}
.tools-scroll .thumb {
    height: 215px;
}

/* Document */
.document {
    flex: 1;
    display: flex;
    flex-direction: column;
    min-width: 0;
    background-color: #fff;
}
.page-view {
    flex: 1;
    display: flex;
    justify-content: space-between;
    min-height: 0;
    overflow: hidden;
}
.page {
    display: flex;
    align-self: flex-start;
    padding: 0 28px 32px 0;
    border-right: 3px solid #57484f;
    border-bottom: 3px solid #57484f;
}
.column-left {
    width: 191px;
}
.body-text {
    font-family: "Liberation Serif", serif;
    font-size: 28px;
    line-height: 33px;
    color: #231f20;
    white-space: nowrap;
}
.column-left .body-text {
    padding: 23px 0 59px;
}
.column-right {
    width: 682px;
}
.step {
    display: block;
    width: 58px;
    height: 59px;
    border-radius: 50%;
    background-color: #57484f;
    box-shadow: 2px 4px 3px #77706f;
    color: #fff;
    font-family: "Liberation Serif", serif;
    font-size: 30px;
    font-weight: bold;
    line-height: 59px;
    text-align: center;
}
.step-4 {
    margin-top: -36px;
}
.step-5 {
    float: left;
    margin: -3px 11px 0 0;
}
.figure {
    margin-left: 64px;
}
.step-text {
    padding-top: 26px;
}
.page-footer {
    display: flex;
    height: 25px;
    background-color: #fbfbfb;
}
.page-size {
    width: 175px;
    padding-left: 30px;
    background-color: #e3e3e3;
    color: #111;
    font-size: 17px;
    line-height: 27px;
}
.hscroll {
    flex: 1;
    display: flex;
    margin-right: 26px;
    background-color: #f0f0f0;
}
.hscroll button {
    display: flex;
    align-items: center;
    justify-content: center;
    width: 26px;
}
.hscroll .thumb {
    width: 511px;
    margin-left: auto;
}

/* Tools pane */
.tools-pane {
    display: flex;
    flex-direction: column;
    width: 345px;
    flex-shrink: 0;
}
.search {
    height: 53px;
    margin: 22px;
    padding: 2px 19px 0;
    border: 1px solid #c8c8c8;
    background-color: #fff;
    font-size: 20px;
}
.search::placeholder {
    color: #999;
}
.export-wrap {
    flex: 1;
    display: flex;
    min-height: 0;
}
.export {
    flex: 1;
    overflow: hidden;
}
.export-head {
    display: flex;
    align-items: center;
    height: 62px;
    padding: 0 34px 0 38px;
    border-bottom: 2px solid #d4d4d4;
}
.export-head h2 {
    flex: 1;
    margin-left: 14px;
    font-size: 22px;
}
.export-body {
    display: flex;
    flex-direction: column;
    padding: 32px 22px 0 23px;
    line-height: 25px;
}
.export-title {
    display: flex;
    align-items: center;
    justify-content: space-between;
    height: 26px;
    margin-bottom: 15px;
}
.export-title h3 {
    font-family: "Liberation Sans", sans-serif;
    font-size: 21px;
    font-weight: bold;
}
.export-body a, .promo a {
    color: #0d55ad;
}
.select-file {
    margin: 31px 0 9px;
}
.file-box, .format-box {
    display: flex;
    align-items: center;
    justify-content: space-between;
    height: 45px;
    padding: 0 10px 0 13px;
    border: 2px solid #dedede;
    border-radius: 6px;
}
.format-box {
    margin-right: -3px;
    padding-right: 16px;
}
.export-body label {
    margin: 29px 0 10px;
}
.format-box select {
    flex: 1;
}
.language {
    margin-top: 20px;
    line-height: 32px;
}
.language a {
    margin-left: 6px;
}
.convert {
    height: 44px;
    margin-top: 72px;
    flex-shrink: 0;
    border-radius: 24px;
    background-color: #2680eb;
    color: #fff;
    font-size: 21px;
}
.promo {
    height: 151px;
    margin: 0 15px;
    padding-top: 30px;
    border-top: 1px solid #c8c8c8;
    line-height: 26px;
    text-align: center;
}
.promo p {
    margin-bottom: 14px;
    font-weight: 600;
}
.promo a {
    font-size: 16px;
}

/* Taskbar */
.taskbar {
    display: flex;
    height: 60px;
    flex-shrink: 0;
    background: linear-gradient(90deg, #cfe3ea 0%, #d4e6ec 50%, #d3dfe9 65%, #dadfe0 75%, #d2e1ea 83%, #cbdfe5 100%);
    color: #111;
}
.taskbar button {
    display: flex;
    align-items: center;
    justify-content: center;
}
.start {
    width: 73px;
}
.task {
    width: 75px;
    background-repeat: no-repeat;
    background-position: bottom;
}
.task.running {
    background-image: linear-gradient(#df9ad8, #df9ad8);
    background-size: 61px 3px;
}
.task.active {
    background-color: #edf4f8;
    background-image: linear-gradient(#df9ad8, #df9ad8);
    background-size: 100% 3px;
}
.tray {
    display: flex;
    align-items: center;
    gap: 16px;
    margin-left: auto;
    margin-right: 7px;
    padding-right: 16px;
    border-right: 1px solid #a9b7bd;
    font-size: 16px;
}
.clock {
    margin: 0 11px 0 5px;
    font-size: 17px;
    line-height: 28px;
    text-align: center;
}
.tray .action {
    position: relative;
    width: 38px;
    height: 60px;
    justify-content: flex-start;
}
.count {
    position: absolute;
    left: 9px;
    top: 28px;
    width: 27px;
    height: 27px;
    border: 1px solid #777;
    border-radius: 50%;
    background-color: #cdd3d6;
    font-size: 16px;
    font-weight: 600;
    line-height: 25px;
    text-align: center;
}
```
